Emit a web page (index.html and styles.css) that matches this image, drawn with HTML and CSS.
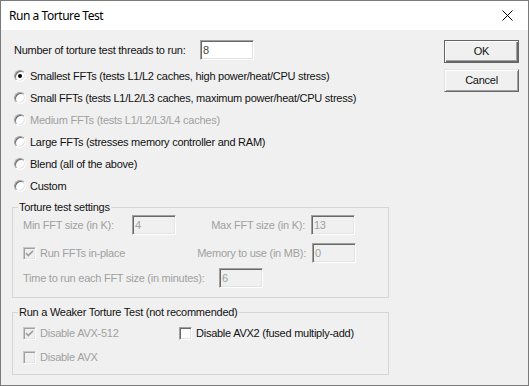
FILE: index.html
```html
<!DOCTYPE html>
<html>
<head>
<meta charset="utf-8">
<title>Run a Torture Test</title>
<link rel="stylesheet" href="styles.css">
</head>
<body>
<div class="window">
	<div class="titlebar">
		<span class="caption">Run a Torture Test</span>
		<svg class="close" width="11" height="11" viewBox="0 0 11 11"><path d="M0.5 0.5L10.5 10.5M10.5 0.5L0.5 10.5" stroke="#000" stroke-width="1" fill="none"/></svg>
	</div>
	<div class="client">
		<div class="main">
			<div class="threads">
				<span class="threads_label">Number of torture test threads to run:</span>
				<span class="edit threads_edit">8</span>
			</div>
			<div class="radio_row"><span class="radio checked"></span><span>Smallest FFTs (tests L1/L2 caches, high power/heat/CPU stress)</span></div>
			<div class="radio_row"><span class="radio"></span><span>Small FFTs (tests L1/L2/L3 caches, maximum power/heat/CPU stress)</span></div>
			<div class="radio_row disabled"><span class="radio"></span><span>Medium FFTs (tests L1/L2/L3/L4 caches)</span></div>
			<div class="radio_row"><span class="radio"></span><span>Large FFTs (stresses memory controller and RAM)</span></div>
			<div class="radio_row"><span class="radio"></span><span>Blend (all of the above)</span></div>
			<div class="radio_row"><span class="radio"></span><span>Custom</span></div>

			<fieldset class="group settings">
				<legend>Torture test settings</legend>
				<div class="set_row disabled row_a">
					<span class="lbl_min">Min FFT size (in K):</span>
					<span class="edit small">4</span>
					<span class="lbl_right w135">Max FFT size (in K):</span>
					<span class="edit small">13</span>
				</div>
				<div class="set_row disabled row_b">
					<span class="check_item w153"><span class="check checked"><svg width="11" height="11" viewBox="0 0 11 11"><path d="M2 5.2L4.3 7.6L9 2.8" stroke="#a0a0a0" stroke-width="1.7" fill="none"/></svg></span>Run FFTs in-place</span>
					<span class="lbl_right w136">Memory to use (in MB):</span>
					<span class="edit small">0</span>
				</div>
				<div class="set_row disabled row_c">
					<span class="lbl_time">Time to run each FFT size (in minutes):</span>
					<span class="edit small">6</span>
				</div>
			</fieldset>

			<fieldset class="group weaker">
				<legend>Run a Weaker Torture Test (not recommended)</legend>
				<div class="set_row chk_row1">
					<span class="check_item w156 disabled"><span class="check checked"><svg width="11" height="11" viewBox="0 0 11 11"><path d="M2 5.2L4.3 7.6L9 2.8" stroke="#a0a0a0" stroke-width="1.7" fill="none"/></svg></span>Disable AVX-512</span>
					<span class="check_item"><span class="check enabled"></span>Disable AVX2 (fused multiply-add)</span>
				</div>
				<div class="set_row chk_row2">
					<span class="check_item disabled"><span class="check"></span>Disable AVX</span>
				</div>
			</fieldset>
		</div>
		<div class="buttons">
			<div class="button default">OK</div>
			<div class="button">Cancel</div>
		</div>
	</div>
</div>
</body>
</html>
```

FILE: styles.css
```css
body{margin:0;font:11px/13px "Liberation Sans", Arial, sans-serif;letter-spacing:-0.25px;color:#111;}
.window{width:529px;height:386px;box-sizing:border-box;border:1px solid #7a7a7a;background:#f0f0f0;display:flex;flex-direction:column;}

.titlebar{height:29px;flex:none;background:#fff;display:flex;align-items:center;padding-left:8px;font:12px "Noto Sans", sans-serif;letter-spacing:-0.45px;color:#000;}
.titlebar .caption{flex:1;}
.titlebar .close{margin-right:15px;}

.client{flex:1;display:flex;padding:10px 9px 0 11px;}
.main{width:377px;}
.buttons{margin-left:auto;display:flex;flex-direction:column;gap:6px;}

.threads{display:flex;align-items:center;height:20px;margin-left:2px;}
.threads_label{width:186px;}
.threads_edit{width:54px;}

.edit{box-sizing:border-box;height:20px;background:#fff;border:1px solid;border-color:#a0a0a0 #fff #fff #a0a0a0;box-shadow:inset 1px 1px #696969, inset -1px -1px #e3e3e3;padding:3px 0 0 2px;color:#444;}
.edit.small{width:44px;}
.disabled .edit{background:#f0f0f0;color:#a0a0a0;}

.radio_row{display:flex;align-items:center;height:22px;margin-left:2px;}
.threads + .radio_row{margin-top:5px;}
.radio{box-sizing:border-box;width:12px;height:12px;margin-right:4px;border-radius:50%;background:#fff;border:1px solid;border-color:#a0a0a0 #fff #fff #a0a0a0;box-shadow:inset 1px 1px #696969, inset -1px -1px #e3e3e3;display:flex;align-items:center;justify-content:center;}
.radio.checked::after{content:"";width:4px;height:4px;border-radius:50%;background:#000;}

.disabled{color:#a0a0a0;}

.group{margin:0;padding:0;border:1px solid #d5d5d5;min-width:0;}
.group legend{margin-left:5px;padding:0 1px;line-height:14px;}
.settings{margin-top:3px;padding-bottom:9px;}
.weaker{margin-top:7px;padding-bottom:10px;}

.set_row{display:flex;align-items:center;padding-left:10px;}
.row_a{height:20px;margin-top:1px;}
.row_b{height:20px;margin-top:8px;}
.row_c{height:20px;margin-top:5px;}
.lbl_min{width:109px;}
.lbl_time{width:196px;}
.lbl_right{box-sizing:border-box;text-align:right;padding-right:6px;}
.w135{width:135px;}
.w136{width:136px;}
.w153{width:153px;}
.w156{width:156px;}

.chk_row1{height:14px;margin-top:7px;}
.chk_row2{height:14px;margin-top:10px;}

.check_item{display:flex;align-items:center;}
.check{box-sizing:border-box;width:13px;height:13px;margin-right:4px;background:#f0f0f0;border:1px solid;border-color:#a0a0a0 #fff #fff #a0a0a0;box-shadow:inset 1px 1px #696969, inset -1px -1px #e3e3e3;display:flex;align-items:center;justify-content:center;}
.disabled .check{border-color:#c8c8c8 #fff #fff #c8c8c8;box-shadow:inset 1px 1px #a0a0a0, inset -1px -1px #e3e3e3;}
.check.enabled{background:#fff;}
.check svg{display:block;}

.button{box-sizing:border-box;width:75px;height:23px;display:flex;align-items:center;justify-content:center;background:#f0f0f0;border:1px solid;border-color:#e3e3e3 #696969 #696969 #e3e3e3;box-shadow:inset 1px 1px #fff, inset -1px -1px #a0a0a0;}
.button.default{border-color:#646464;box-shadow:inset 1px 1px #fff, inset -1px -1px #696969, inset -2px -2px #a0a0a0;}
```
